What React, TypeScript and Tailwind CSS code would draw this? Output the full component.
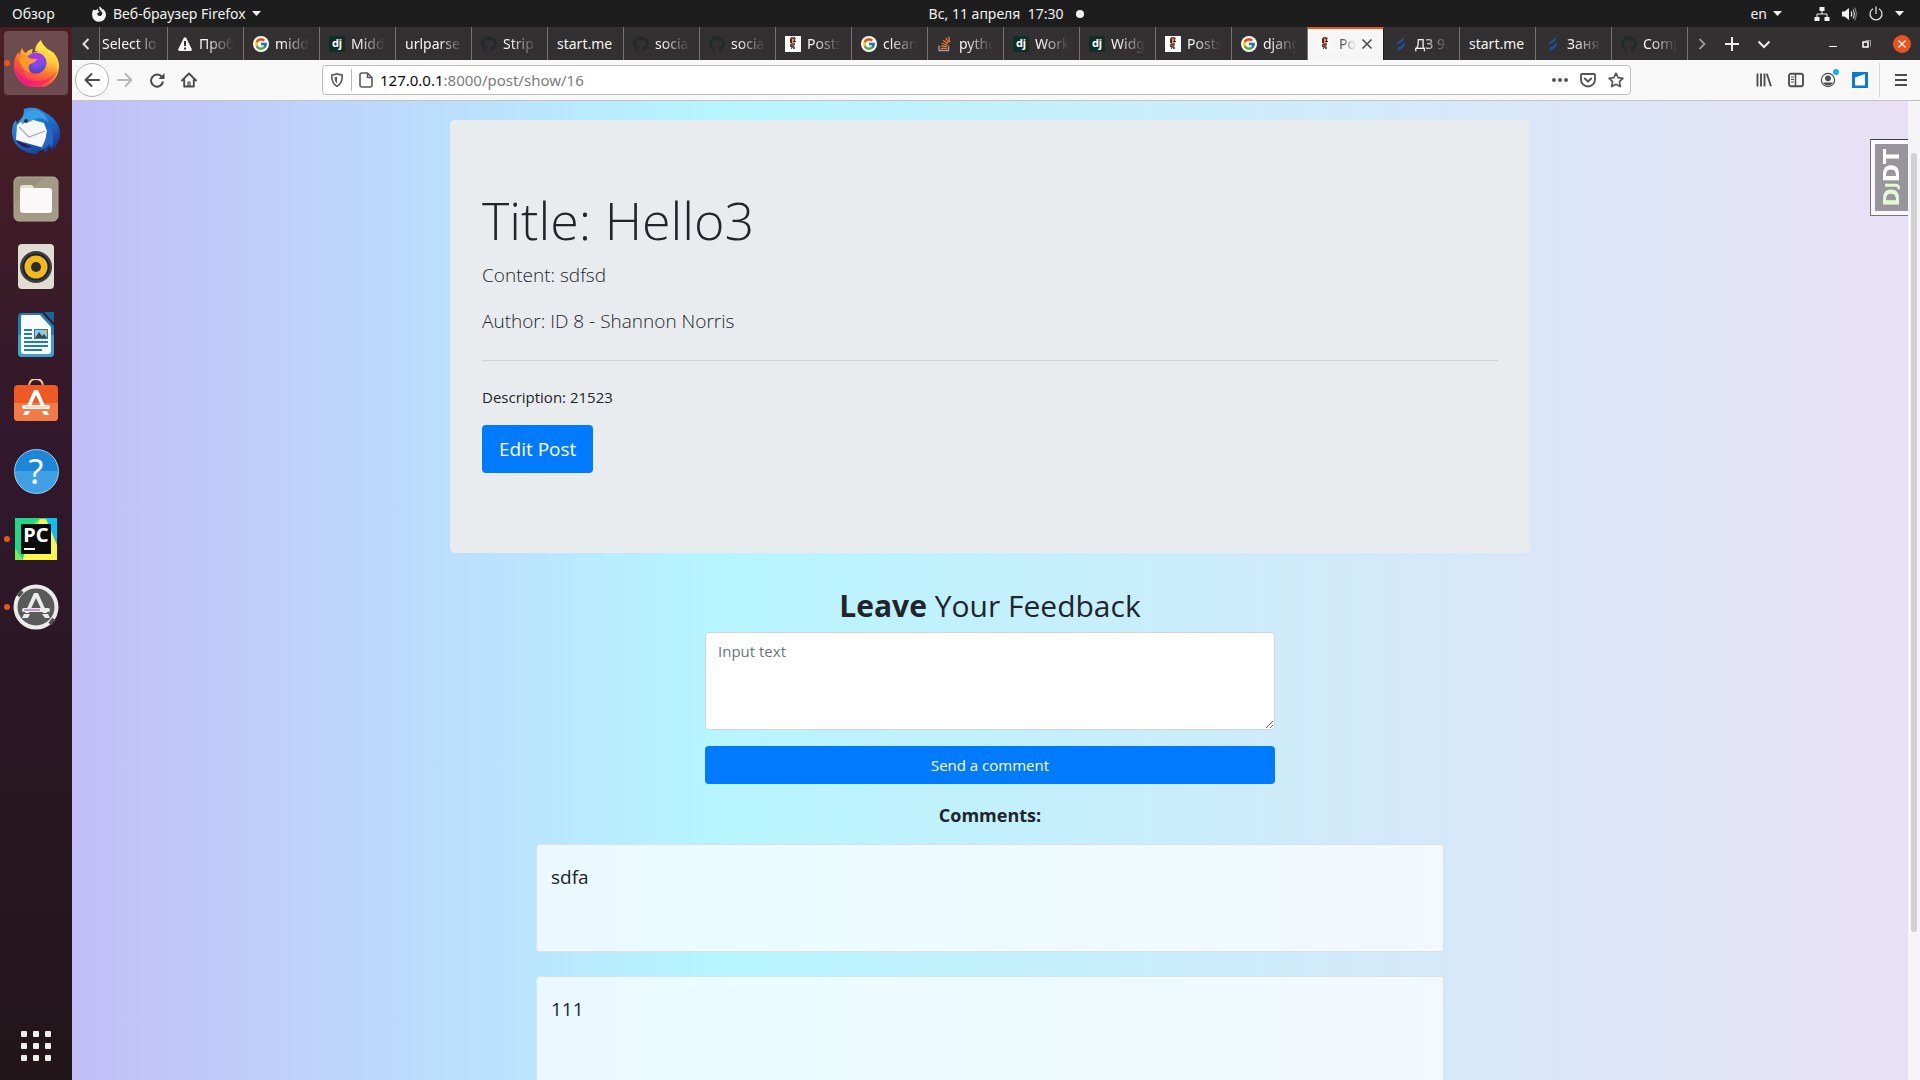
import { type ReactNode } from "react";
import { FcGoogle } from "react-icons/fc";
import { FaGithub } from "react-icons/fa";

type IconName = "warn" | "google" | "django" | "github" | "mario" | "stack" | "slashes" | null;

const tabs: { icon: IconName; title: string; active?: boolean }[] = [
  { icon: null, title: "Select lo" },
  { icon: "warn", title: "Проб" },
  { icon: "google", title: "midd" },
  { icon: "django", title: "Midd" },
  { icon: null, title: "urlparse" },
  { icon: "github", title: "Strip" },
  { icon: null, title: "start.me" },
  { icon: "github", title: "socia" },
  { icon: "github", title: "socia" },
  { icon: "mario", title: "Posts" },
  { icon: "google", title: "clean" },
  { icon: "stack", title: "pytho" },
  { icon: "django", title: "Work" },
  { icon: "django", title: "Widg" },
  { icon: "mario", title: "Posts" },
  { icon: "google", title: "djang" },
  { icon: "mario", title: "Po", active: true },
  { icon: "slashes", title: "ДЗ 9." },
  { icon: null, title: "start.me" },
  { icon: "slashes", title: "Заня" },
  { icon: "github", title: "Comp" },
];

function Caret() {
  return (
    <svg className="h-[5px] w-[9px]" viewBox="0 0 9 5" aria-hidden="true">
      <path d="M0 0h9L4.500 5z" fill="#f2f2f2" />
    </svg>
  );
}

function Mario({ clear }: { clear?: boolean }) {
  return (
    <svg className="size-4" viewBox="0 0 16 16" shapeRendering="crispEdges" aria-hidden="true">
      <path d="M0 0h16v16H0z" fill={clear ? "#f8f8f8" : "#ffffff"} />
      <path d="M6 1h4v1h1v1H5V2h1z" fill="#b8392e" />
      <path d="M5 3h2v4H5z" fill="#4a2a1a" />
      <path d="M7 3h3v4H7z" fill="#d99a72" />
      <path d="M9 3h1v2H9zM8 5h3v1H8z" fill="#3a2620" />
      <path d="M6 7h4v1H6z" fill="#b8503f" />
      <path d="M5 8h2v3H5z" fill="#6a4234" />
      <path d="M7 8h3v3H7z" fill="#8a4a3c" />
      <path d="M9 9h1v2H9z" fill="#8cc4e4" />
      <path d="M6 11h2v1H6zM8 11h2v2H8z" fill="#56628a" />
      <path d="M6 12h1v1H6z" fill="#6a4234" />
    </svg>
  );
}

function TabIcon({ name, active }: { name: IconName; active?: boolean }) {
  switch (name) {
    case "warn":
      return (
        <svg className="size-4" viewBox="0 0 16 16" aria-hidden="true">
          <path d="M8 1.200c.6 0 1 .3 1.300.8l5.400 11c.5 1-.1 2-1.200 2h-11c-1.100 0-1.700-1-1.200-2l5.400-11c.3-.5.700-.8 1.300-.8z" fill="#f4f4f4" />
          <path d="M7 5h2v5H7zM7 11.500h2v2H7z" fill="#333031" />
        </svg>
      );
    case "google":
      return (
        <span className="grid size-4 place-items-center rounded-full bg-white">
          <FcGoogle className="size-[14px]" />
        </span>
      );
    case "django":
      return (
        <span className="grid size-4 place-items-center bg-[#0f2e26] pb-0.5 font-['Noto_Sans'] text-[11px] leading-none font-bold text-white">dj</span>
      );
    case "github":
      return <FaGithub className="size-4 text-[#24292e]" />;
    case "mario":
      return <Mario clear={active} />;
    case "stack":
      return (
        <svg className="size-4" viewBox="0 0 16 16" aria-hidden="true">
          <path d="M2 9.500v5h9.500v-5" fill="none" stroke="#9a9c9f" strokeWidth="1.400" />
          <path d="M3.800 12.300h6M4 9.800l5.900.7M4.700 7l5.500 2M6.200 4.200l4.700 3.500M8.600 1.800l3.200 4.800M11.700.6l1 5.400" stroke="#ef7a1f" strokeWidth="1.300" />
        </svg>
      );
    case "slashes":
      return (
        <svg className="size-4" viewBox="0 0 16 16" aria-hidden="true">
          <path d="M4 8.500C4 5 8.500 4.500 10.500 1c.8 4-2 6-6.500 7.500zM4 15c0-5 5-5 8-9 .8 5-3.500 7-8 9z" fill="#1f4f9c" />
        </svg>
      );
    default:
      return null;
  }
}

function Tab({ icon, title, active, first }: { icon: IconName; title: string; active?: boolean; first?: boolean }) {
  return (
    <button
      role="tab"
      aria-selected={!!active}
      className={
        "flex shrink-0 items-center overflow-hidden border-r text-left " +
        (first ? "w-17 pr-2 pl-0.5 " : "w-19 pr-2 pl-[9px] ") +
        (active ? "border-[#1c1b1c] border-t-2 border-t-[#e95420] bg-[#f6f6f6] pb-0.5 text-[#555]" : "border-[#737172] text-[#f4f4f4]")
      }
    >
      {icon && (
        <span className="mr-1.5 shrink-0">
          <TabIcon name={icon} active={active} />
        </span>
      )}
      <span
        className={
          "min-w-0 flex-1 overflow-hidden whitespace-nowrap " +
          (title === "start.me"
            ? ""
            : icon
              ? "[mask-image:linear-gradient(to_right,black_20%,transparent_95%)]"
              : "[mask-image:linear-gradient(to_right,black_60%,transparent_100%)]")
        }
      >
        {title}
      </span>
      {active && (
        <svg className="mr-0.5 ml-1 size-3 shrink-0" viewBox="0 0 12 12" aria-hidden="true">
          <path d="M1.500 1.500l9 9M10.500 1.500l-9 9" stroke="#4a4a4a" strokeWidth="1.600" />
        </svg>
      )}
    </button>
  );
}

function TopBar() {
  return (
    <header className="flex h-[27px] shrink-0 items-center bg-[#1d1d1d] text-[#f0f0f0]">
      <button className="w-18 pl-3 text-left">Обзор</button>
      <div className="grid flex-1 grid-cols-[1fr_auto_1fr] items-center">
        <button className="flex items-center gap-1.5 pl-[19px]">
          <svg className="size-4" viewBox="0 0 16 16" aria-hidden="true">
            <path
              d="M8.500.5c2 1 2.400 2.200 2.700 2.900.6-.3 1-.2 1-.2s2.800 1.800 2.800 5.600a6.900 6.900 0 0 1-13.900.2C.9 6.500 1.600 4.400 2.700 3.200l.5 1.300C3.900 4 4.600 3.900 5.300 4c.7-.8 1.500-1 2-1-.4.6-.6 1.200-.4 1.800.6.5 1.400.3 1.800.8-.3 1.200-2 .8-2.400 2-.2 1.600 1 2.500 2.200 2.500 1.600 0 2.700-1.200 2.700-2.600 0-2.100-1.800-2.600-2.500-4C8.200 2.400 8.200 1.200 8.500.5z"
              fill="#f2f2f2"
            />
          </svg>
          <span>Веб-браузер Firefox</span>
          <Caret />
        </button>
        <button className="whitespace-pre">Вс, 11 апреля  17:30</button>
        <div className="flex items-center justify-between pr-4">
          <span className="ml-[13px] size-2 rounded-full bg-[#f2f2f2]" />
          <div className="flex items-center">
            <button className="mr-8 flex items-center gap-1.5">
              en <Caret />
            </button>
            <button className="flex items-center gap-[11px]" aria-label="Система">
              <svg className="size-4" viewBox="0 0 16 16" fill="#f2f2f2" aria-hidden="true">
                <path d="M5.500 1h5v4h-5zM.5 11h5v4h-5zM10.500 11h5v4h-5z" />
                <path d="M8 5v3M3 11V8h10v3" fill="none" stroke="#f2f2f2" />
              </svg>
              <svg className="size-4" viewBox="0 0 16 16" aria-hidden="true">
                <path d="M1 5.500h2.500L8 2v12l-4.500-3.500H1z" fill="#f2f2f2" />
                <path d="M10 5.500c1 1.500 1 3.500 0 5" fill="none" stroke="#f2f2f2" strokeWidth="1.200" />
                <path d="M12 3.500c1.800 2.500 1.800 6.500 0 9" fill="none" stroke="#d0d0d0" strokeWidth="1.200" />
                <path d="M13.500 1.500c2.300 4 2.300 9 0 13" fill="none" stroke="#999" />
              </svg>
              <svg className="size-4" viewBox="0 0 16 16" fill="none" stroke="#e8e8e8" strokeWidth="1.200" aria-hidden="true">
                <path d="M5 2.700a6 6 0 1 0 6 0M8 .5v7.500" />
              </svg>
              <Caret />
            </button>
          </div>
        </div>
      </div>
    </header>
  );
}

function DockItem({ label, running, active, children }: { label: string; running?: boolean; active?: boolean; children: ReactNode }) {
  return (
    <button
      aria-label={label}
      className={"relative grid size-16 place-items-center rounded-[4px] " + (active ? "bg-white/20" : "")}
    >
      {running && <span className="absolute top-[29px] left-0 size-1.5 rounded-full bg-[#e95420]" />}
      {children}
    </button>
  );
}

function Dock() {
  return (
    <nav className="flex w-18 shrink-0 flex-col items-center gap-1 bg-linear-to-b from-[#4a1f22] via-[#31182b] via-40% to-[#211519] pt-1 pb-0.5">
      <DockItem label="Firefox" running active>
        <svg className="size-12" viewBox="0 0 48 48" aria-hidden="true">
          <defs>
            <linearGradient id="fx" x1=".85" y1=".1" x2=".2" y2=".95">
              <stop offset="0" stopColor="#fff44f" />
              <stop offset=".35" stopColor="#ffb02e" />
              <stop offset=".6" stopColor="#ff5a36" />
              <stop offset="1" stopColor="#e31587" />
            </linearGradient>
            <linearGradient id="fxTail" x1=".6" y1="0" x2=".4" y2="1">
              <stop offset="0" stopColor="#fff44f" />
              <stop offset=".45" stopColor="#ffc93a" />
              <stop offset=".75" stopColor="#ff7a2c" />
              <stop offset="1" stopColor="#ff3d54" />
            </linearGradient>
            <radialGradient id="fxGlobe" cx=".55" cy=".2" r=".85">
              <stop offset="0" stopColor="#b833e1" />
              <stop offset=".5" stopColor="#7b4af0" />
              <stop offset="1" stopColor="#4a3fae" />
            </radialGradient>
          </defs>
          <path d="M10 9c1 3 2 4 4 5 2-3 5-4 7-4-1 2-1 3-1 4l15-4c8 3 12 10 12 18A22.500 22.500 0 0 1 2 26c0-6 2-10 5-13 0 2 0 2 1 3 0-3 1-5 2-7z" fill="url(#fx)" />
          <path d="M29 1c-4 3-6 7-6 11 8 0 12 5 12 12 0 7-5 12-12 12-5 0-9-2-11-6 0 8 6 13 14 13 11 0 19-8 19-18 0-5-1-9-4-12l-2 3c-1-6-9-9-10-15z" fill="url(#fxTail)" />
          <circle cx="24" cy="24" r="10.500" fill="url(#fxGlobe)" />
          <path d="M7 20c3-2 6-3 9-2 2 2 5 2 9 2-1 4-6 4-8 6-1 3 0 5 2 8-7-2-10-7-12-14z" fill="#ff9a22" />
          <path d="M3 30c3 10 11 16 21 16s19-6 22-16c-5 8-12 12-21 12S8 38 3 30z" fill="#f0157c" opacity=".55" />
        </svg>
      </DockItem>
      <DockItem label="Thunderbird">
        <svg className="size-12" viewBox="0 0 48 48" aria-hidden="true">
          <defs>
            <linearGradient id="tb" x1=".2" y1="0" x2=".8" y2="1">
              <stop offset="0" stopColor="#2f9be8" />
              <stop offset=".6" stopColor="#1b62c0" />
              <stop offset="1" stopColor="#1a2f86" />
            </linearGradient>
          </defs>
          <path d="M12 2c10-3 16 0 20 3 9 4 16 12 16 21 0 7-3 13-8 17l-3-3-3 6-4-4-6 5C10 46 0 37 0 25c0-5 1-9 4-12l1 4c2-4 4-6 7-7-1-3 0-6 0-8z" fill="url(#tb)" />
          <path d="M5 18l9-7 18 5 3 8-3 17-28-8z" fill="#f7f7f9" />
          <path d="M7 20l10 10 16-6M17 30" fill="none" stroke="#a9a9b2" strokeWidth="1.200" />
          <path d="M10 17c-3-7 5-15 14-14 6 1 11 6 12 12-5-5-11-5-15-2-3 2-6 3-8 2-1 2-2 2-3 2z" fill="#3b9de6" />
          <circle cx="14" cy="14" r="2" fill="#39322e" />
          <path d="M34 16c6 4 9 12 6 24l-3-3c-2 3-5 5-9 6 5-8 9-16 6-27z" fill="#2369c4" />
          <path d="M4 33l16 7c-7 2-13-1-16-7z" fill="#2a1c5c" />
        </svg>
      </DockItem>
      <DockItem label="Файлы">
        <svg className="size-12" viewBox="0 0 48 48" aria-hidden="true">
          <rect x="2" y="2" width="44" height="44" rx="5" fill="#9a917c" stroke="#b3ab98" />
          <path d="M2.500 28L32 2.500h9a5 5 0 0 1 5 5V41a5 5 0 0 1-5 5H7a5 5 0 0 1-5-5z" fill="#aaa18e" opacity=".6" />
          <path d="M8 13c0-2 1-3 3-3h8c2 0 2 2 4 4H8z" fill="#e6e0d3" />
          <rect x="8" y="13" width="32" height="25" rx="3" fill="#faf9f8" />
        </svg>
      </DockItem>
      <DockItem label="Rhythmbox">
        <svg className="size-12" viewBox="0 0 48 48" aria-hidden="true">
          <rect x="6" y="1" width="36" height="45" rx="4" fill="#e2ddd2" />
          <circle cx="24" cy="24" r="16" fill="#3c3f4a" />
          <circle cx="24" cy="24" r="13.500" fill="#1f2126" />
          <circle cx="24" cy="24" r="11.500" fill="#f0b91c" />
          <circle cx="24" cy="24" r="5" fill="#2a2b2e" />
        </svg>
      </DockItem>
      <DockItem label="LibreOffice Writer">
        <svg className="size-12" viewBox="0 0 48 48" aria-hidden="true">
          <path d="M10 2h20l12 13v27a4 4 0 0 1-4 4H10a4 4 0 0 1-4-4V6a4 4 0 0 1 4-4z" fill="#1d7fb5" />
          <path d="M6 24h36v18a4 4 0 0 1-4 4H10a4 4 0 0 1-4-4z" fill="#3f9fce" />
          <path d="M32 1h10v11z" fill="#15689c" />
          <path d="M10 4h18l11 12v24a3 3 0 0 1-3 3H12a3 3 0 0 1-3-3V5z" fill="#fcfcfd" />
          <path d="M12 19h8M12 23h8M12 27h8M12 31h24M12 35h24M12 39h18" stroke="#1d7fb5" strokeWidth="2" />
          <rect x="22.500" y="18.500" width="13" height="9" fill="#8ecbf0" stroke="#1d7fb5" />
          <path d="M23 27l4-6 3 4 2-2 3 4z" fill="#444" />
          <path d="M31 19h4v4z" fill="#f2b91c" />
        </svg>
      </DockItem>
      <DockItem label="Ubuntu Software">
        <svg className="size-12" viewBox="0 0 48 48" aria-hidden="true">
          <path d="M17 8c0-6 3-8 7-8s7 2 7 8" fill="none" stroke="#f1cf94" strokeWidth="1.800" />
          <rect x="2" y="6" width="44" height="36" rx="4" fill="#ef5a24" />
          <path d="M2 24h44v14a4 4 0 0 1-4 4H6a4 4 0 0 1-4-4z" fill="#f27a46" />
          <path d="M22 11h4l8 18h-4l-6-13-6 13h-4z" fill="#fff" />
          <rect x="10" y="26" width="28" height="4" rx="2" fill="#fff" />
          <path d="M13 32h5l-2 4h-5zM30 32h5l2 4h-5z" fill="#fff" />
          <path d="M13 28h22" stroke="#f4b090" />
        </svg>
      </DockItem>
      <DockItem label="Справка">
        <span className="grid size-[45px] place-items-center rounded-full border border-[#9ccff0] bg-linear-to-b from-[#1b87d6] from-50% to-[#3fa0e4] to-50% font-['Noto_Sans'] text-[34px] leading-none text-white">
          ?
        </span>
      </DockItem>
      <DockItem label="PyCharm" running>
        <span className="relative grid size-[42px] place-items-center">
          <svg className="absolute inset-0 size-full" viewBox="0 0 42 42" aria-hidden="true">
            <path d="M0 0h42v42H0z" fill="#21d789" />
            <path d="M30 0h12v30L30 12z" fill="#07c3f2" />
            <path d="M14 10L25 1h6l11 26v15H8z" fill="#fcf84a" />
            <path d="M0 30l8 12H0zM14 10L25 1l-5 12z" fill="#7be85e" />
          </svg>
          <span className="relative flex size-[30px] flex-col justify-between bg-[#0b0b0b] pb-1">
            <span className="text-center font-['Noto_Sans'] text-[20px] leading-[22px] font-bold text-white">PC</span>
            <span className="ml-[3px] h-0.5 w-[11px] bg-white" />
          </span>
        </span>
      </DockItem>
      <DockItem label="Обновление приложений" running>
        <svg className="size-12" viewBox="0 0 48 48" aria-hidden="true">
          <circle cx="24" cy="24" r="20.500" fill="#5a5a5a" stroke="#ebebeb" strokeWidth="4" />
          <path d="M6 13l4-5M38 41l4-5" stroke="#4e4e4e" strokeWidth="4" />
          <path d="M22 10h4l9 20h-4l-7-15-7 15h-4z" fill="#ebebeb" />
          <rect x="10" y="25" width="28" height="4" rx="2" fill="#ebebeb" />
          <path d="M12 27h16" stroke="#9a4a94" />
          <path d="M12 31h6l-2 4h-6zM30 31h6l2 4h-5z" fill="#ebebeb" />
        </svg>
      </DockItem>
      <button aria-label="Показать приложения" className="mt-auto grid size-16 place-items-center">
        <span className="grid grid-cols-3 gap-1.5">
          {Array.from({ length: 9 }, (_, i) => (
            <span key={i} className="size-1.5 rounded-[1px] bg-[#f1efec]" />
          ))}
        </span>
      </button>
    </nav>
  );
}

function TabStrip() {
  return (
    <div className="flex h-[33px] shrink-0 items-stretch bg-[#333031] text-[#f4f4f4]">
      <button aria-label="Назад по вкладкам" className="grid w-7 place-items-center border-r border-[#737172]">
        <svg className="size-4" viewBox="0 0 16 16" fill="none" stroke="#e0e0e0" strokeWidth="2" aria-hidden="true">
          <path d="M10.500 3L5.500 8l5 5" />
        </svg>
      </button>
      <div role="tablist" className="flex">
        {tabs.map((t, i) => (
          <Tab key={i} {...t} first={i === 0} />
        ))}
      </div>
      <div className="flex flex-1 items-center justify-between pr-[9px] pl-1.5">
        <div className="flex items-center gap-4">
          <button aria-label="Вперёд по вкладкам" className="-mr-0.5">
            <svg className="size-4" viewBox="0 0 16 16" fill="none" stroke="#9a9899" strokeWidth="1.800" aria-hidden="true">
              <path d="M5.500 3l5 5-5 5" />
            </svg>
          </button>
          <button aria-label="Новая вкладка">
            <svg className="size-4" viewBox="0 0 16 16" stroke="#ececec" strokeWidth="2" aria-hidden="true">
              <path d="M8 1v14M1 8h14" />
            </svg>
          </button>
          <button aria-label="Список вкладок">
            <svg className="size-4" viewBox="0 0 16 16" fill="none" stroke="#ececec" strokeWidth="2" aria-hidden="true">
              <path d="M2.500 5.500L8 11l5.500-5.500" />
            </svg>
          </button>
        </div>
        <div className="flex items-center gap-[18px]">
          <button aria-label="Свернуть">
            <svg className="size-4" viewBox="0 0 16 16" aria-hidden="true">
              <path d="M4 10h8v1H4z" fill="#fff" />
            </svg>
          </button>
          <button aria-label="Восстановить">
            <svg className="size-4" viewBox="0 0 16 16" fill="none" aria-hidden="true">
              <path d="M6.500 4.500h5v6" stroke="#9a9899" />
              <rect x="4" y="6" width="5" height="5" stroke="#fff" strokeWidth="1.500" />
            </svg>
          </button>
          <button aria-label="Закрыть" className="grid size-[18px] place-items-center rounded-full bg-[#e95420]">
            <svg className="size-2" viewBox="0 0 8 8" stroke="#fff" strokeWidth="1.300" aria-hidden="true">
              <path d="M.5.5l7 7M7.500.5l-7 7" />
            </svg>
          </button>
        </div>
      </div>
    </div>
  );
}

function ToolBar() {
  return (
    <div className="flex h-[41px] shrink-0 items-center border-b border-[#c4c3c3] bg-[#f8f8f8] pl-[3px] text-[#555]">
      <button aria-label="Назад" className="grid size-[34px] place-items-center rounded-full border border-[#b0b0b0] bg-white">
        <svg className="size-4" viewBox="0 0 16 16" fill="none" stroke="#4a4a4a" strokeWidth="2" strokeLinecap="round" strokeLinejoin="round" aria-hidden="true">
          <path d="M15 8H1.500M7.500 2L1.500 8l6 6" />
        </svg>
      </button>
      <div className="ml-2 flex items-center gap-4">
        <button aria-label="Вперёд">
          <svg className="size-4" viewBox="0 0 16 16" fill="none" stroke="#b5b5b5" strokeWidth="1.800" strokeLinecap="round" strokeLinejoin="round" aria-hidden="true">
            <path d="M1 8h13.500M8.500 2l6 6-6 6" />
          </svg>
        </button>
        <button aria-label="Обновить">
          <svg className="size-4" viewBox="0 0 16 16" aria-hidden="true">
            <path d="M13 5.200A6 6 0 1 0 14 9.500" fill="none" stroke="#4a4a4a" strokeWidth="2" />
            <path d="M15.500 1v6h-6z" fill="#4a4a4a" />
          </svg>
        </button>
        <button aria-label="Домой">
          <svg className="size-4" viewBox="0 0 16 16" fill="none" stroke="#4a4a4a" strokeWidth="1.900" strokeLinejoin="round" strokeLinecap="round" aria-hidden="true">
            <path d="M1 8.500L8 1.500l7 7M3.200 8v6.500h9.600V8" />
            <path d="M7 14v-4h2v4z" strokeWidth="1.200" />
          </svg>
        </button>
      </div>
      <div className="ml-[125px] flex h-[30px] flex-1 items-center rounded-[4px] border border-[#bdbdbd] bg-white pr-1.5 pl-1.5">
        <svg className="size-4 shrink-0" viewBox="0 0 16 16" fill="none" stroke="#5a5a5a" aria-hidden="true">
          <path d="M8 1.700c2 .9 3.500 1.200 5.200 1.300.3 5.500-1 9-5.200 11.400C3.800 12 2.500 8.500 2.800 3 4.500 2.900 6 2.600 8 1.700z" strokeWidth="1.600" />
          <path d="M8 4.500v7C6.300 10 5.600 8 5.500 5.200 6.500 5.100 7.200 4.900 8 4.500z" fill="#5a5a5a" stroke="none" />
        </svg>
        <span className="mx-1.5 h-[22px] w-px bg-[#b9b9b9]" />
        <svg className="size-4 shrink-0" viewBox="0 0 16 16" fill="none" stroke="#5a5a5a" strokeWidth="1.600" strokeLinejoin="round" aria-hidden="true">
          <path d="M4 1h5.500L14 5.500V13a2 2 0 0 1-2 2H4a2 2 0 0 1-2-2V3a2 2 0 0 1 2-2zM9.500 1v4.500H14" />
        </svg>
        <span className="ml-1.5 flex-1 text-[15px] text-[#7c7c7c]">
          <span className="text-[#0c0c0d]">127.0.0.1</span>:8000/post/show/16
        </span>
        <div className="flex items-center gap-3">
          <button aria-label="Действия на странице">
            <svg className="size-4" viewBox="0 0 16 16" fill="#555" aria-hidden="true">
              <circle cx="2" cy="8" r="2" />
              <circle cx="8" cy="8" r="2" />
              <circle cx="14" cy="8" r="2" />
            </svg>
          </button>
          <button aria-label="Pocket">
            <svg className="size-4" viewBox="0 0 16 16" fill="none" stroke="#555" strokeWidth="1.900" strokeLinecap="round" strokeLinejoin="round" aria-hidden="true">
              <path d="M2 2h12c.7 0 1 .3 1 1v4.500a7 7 0 0 1-14 0V3c0-.7.300-1 1-1z" />
              <path d="M4.800 6.500L8 9.500l3.200-3" />
            </svg>
          </button>
          <button aria-label="Добавить в закладки">
            <svg className="size-4" viewBox="0 0 16 16" fill="none" stroke="#555" strokeWidth="1.700" strokeLinejoin="round" aria-hidden="true">
              <path d="M8 1.200l2.100 4.400 4.800.7-3.500 3.400.9 4.900L8 12.300l-4.300 2.300.9-4.900L1.100 6.300l4.800-.7z" />
            </svg>
          </button>
        </div>
      </div>
      <div className="ml-[125px] flex items-center gap-4">
        <button aria-label="Библиотека">
          <svg className="size-4" viewBox="0 0 16 16" stroke="#4f4f4f" strokeWidth="1.900" aria-hidden="true">
            <path d="M1.500 1.500v13M5 1.500v13M8.500 1.500v13M10.800 1.800l4.200 12.500" />
          </svg>
        </button>
        <button aria-label="Боковая панель">
          <svg className="size-4" viewBox="0 0 16 16" fill="none" stroke="#4f4f4f" aria-hidden="true">
            <rect x="1" y="1.800" width="14" height="12.400" rx="2" strokeWidth="1.900" />
            <path d="M7.500 2v12" strokeWidth="1.500" />
            <path d="M3 5h3M3 7.500h3M3 10h3" />
          </svg>
        </button>
        <button aria-label="Аккаунт" className="relative">
          <svg className="size-4" viewBox="0 0 16 16" aria-hidden="true">
            <circle cx="8" cy="8" r="6.600" fill="none" stroke="#4f4f4f" strokeWidth="1.200" />
            <circle cx="8" cy="6.300" r="2.900" fill="#4f4f4f" />
            <path d="M3.300 10.500h9.400C12 12.500 10 13.500 8 13.500s-4-1-4.700-3z" fill="#4f4f4f" />
          </svg>
          <span className="absolute -top-[3px] -right-[3px] size-1.5 rounded-full bg-[#12aef5]" />
        </button>
        <button aria-label="Расширение">
          <svg className="size-4" viewBox="0 0 16 16" aria-hidden="true">
            <rect width="16" height="16" fill="#0a7bd0" />
            <path d="M3 5.500L13 2v11.500H3z" fill="#fff" />
          </svg>
        </button>
      </div>
      <span className="ml-[11px] h-[34px] w-px bg-[#d7d7d7]" />
      <button aria-label="Меню" className="mr-[11px] ml-[13px]">
        <svg className="size-4" viewBox="0 0 16 16" stroke="#4a4a4a" strokeWidth="2" aria-hidden="true">
          <path d="M2 3h12M2 8h12M2 13h12" />
        </svg>
      </button>
    </div>
  );
}

function Comment({ text }: { text: string }) {
  return (
    <li className="min-h-[108px] rounded-[4px] border border-[#dee2e6] bg-white/70 px-3.5 pt-[17px] text-[19px] leading-[30px]">
      {text}
    </li>
  );
}

function Page() {
  return (
    <main className="min-w-0 flex-1 overflow-hidden bg-[linear-gradient(to_right,#c2bef8_0%,#b6f5ff_35%,#e9e0f5_100%)] px-8 pt-[19px] font-['Open_Sans','Noto_Sans',sans-serif] text-[15px] leading-6 text-[#212529]">
      <section className="mx-auto mb-8 max-w-[1080px] rounded-[5px] bg-[#e9ecef] px-8 py-16">
        <h1 className="mb-1 text-[52px] leading-[72px] font-light">Title: Hello3</h1>
        <p className="mb-4 text-[19px] leading-[30px] font-light">Content: sdfsd</p>
        <p className="text-[19px] leading-[30px] font-light">Author: ID 8 - Shannon Norris</p>
        <hr className="my-6 border-[#cfd3d6]" />
        <p className="mb-4">Description: 21523</p>
        <a href="#edit" className="mb-4 inline-block h-12 rounded-[4px] bg-[#007bff] px-[17px] text-[19px] leading-12 text-white">
          Edit Post
        </a>
      </section>
      <form className="mx-auto flex max-w-[570px] flex-col" onSubmit={(e) => e.preventDefault()}>
        <label htmlFor="feedback" className="mb-1.5 text-center text-[30px] leading-[41px]">
          <strong className="font-bold">Leave</strong> Your Feedback
        </label>
        <textarea
          id="feedback"
          rows={3}
          placeholder="Input text"
          className="mb-4 h-[98px] rounded-[4px] border border-[#ced4da] bg-white px-3 py-1.5 placeholder:text-[#6c757d]"
        />
        <button type="submit" className="h-[38px] rounded-[4px] bg-[#007bff] text-white">
          Send a comment
        </button>
      </form>
      <h2 className="mt-[19px] mb-[17px] text-center text-[18px] leading-6 font-bold">Comments:</h2>
      <ul className="mx-auto flex max-w-[908px] flex-col gap-6">
        <Comment text="sdfa" />
        <Comment text="111" />
      </ul>
    </main>
  );
}

export default function App() {
  return (
    <div className="flex h-screen flex-col overflow-hidden font-['Noto_Sans',sans-serif] text-[14px] leading-5">
      <TopBar />
      <div className="flex min-h-0 flex-1">
        <Dock />
        <div className="flex min-w-0 flex-1 flex-col">
          <TabStrip />
          <ToolBar />
          <div className="relative flex min-h-0 flex-1">
            <Page />
            <div className="flex w-3 shrink-0 flex-col bg-[#f5f5f5] pt-[52px]">
              <div className="mx-auto h-[84%] w-1.5 rounded-full bg-[#d1d1d1]" />
            </div>
            <button
              aria-label="Django Debug Toolbar"
              className="absolute top-[38px] right-3 h-[77px] w-[38px] border border-r-0 border-[#77757c] border-t-[#3f3d44] bg-[#faf8fd] py-1 pl-1"
            >
              <span className="flex h-full w-full items-center justify-center bg-[#98959c]">
                <span className="rotate-180 font-['DejaVu_Sans'] text-[22px] leading-none font-bold text-white [writing-mode:vertical-rl]">
                  <span className="text-[#e3f9d6]">
                    D<span className="text-[16px]">J</span>
                  </span>
                  DT
                </span>
              </span>
            </button>
          </div>
        </div>
      </div>
    </div>
  );
}
